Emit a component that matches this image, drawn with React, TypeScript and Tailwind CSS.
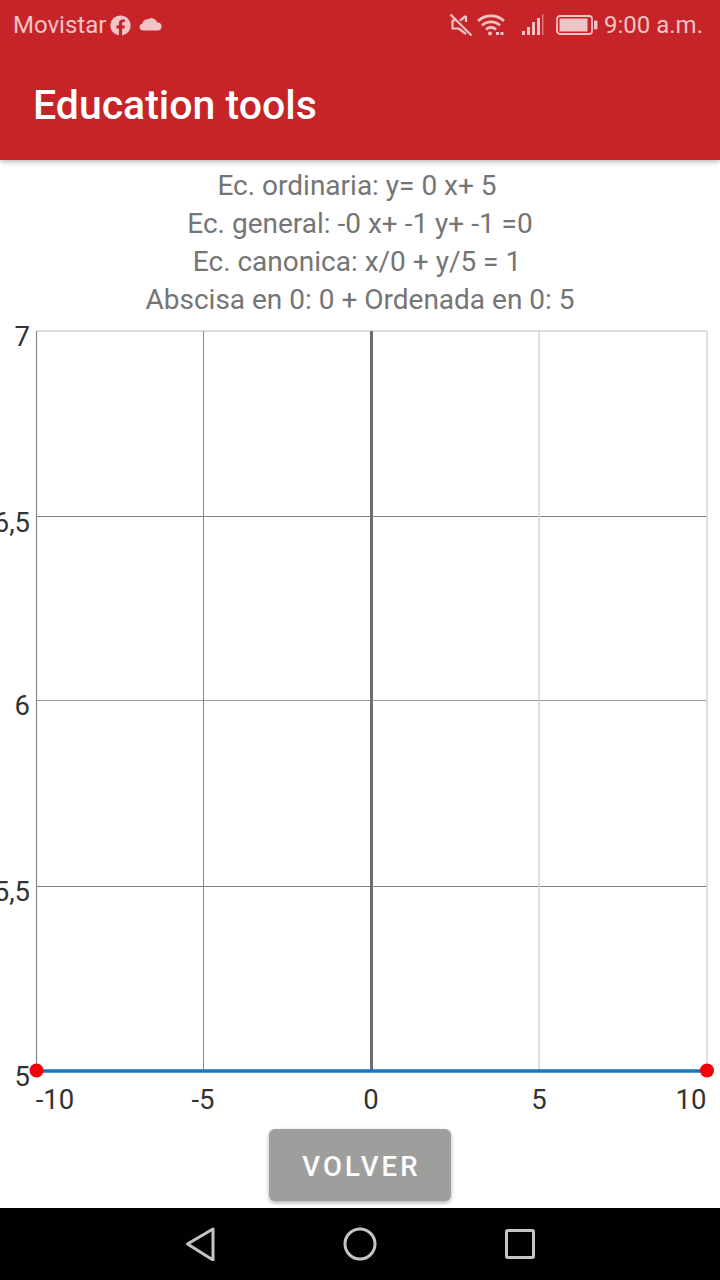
export default function App() {
  const roboto = "font-['Roboto',sans-serif]";
  return (
    <div className={`w-[720px] h-[1280px] bg-white flex flex-col overflow-hidden ${roboto}`}>
      <header className="h-[160px] shrink-0 bg-[#c62428] flex flex-col shadow-[0_2px_5px_rgba(0,0,0,0.28)] relative z-10">
        <div className="h-[50px] shrink-0 flex items-center justify-between pl-[13px] pr-[17px] text-[#f3c3c5]">
          <div className="flex items-center">
            <span className="text-[24px] leading-[30px]">Movistar</span>
            <svg className="ml-[4px]" width="21" height="21" viewBox="0 0 21 21">
              <path fill="#f3c3c5" d="M10.5 0.5a10 10 0 0 0-1.6 19.9v-7H6.4v-2.9h2.5V8.3c0-2.5 1.500-3.900 3.800-3.900 1.100 0 2.200.2 2.200.2v2.500h-1.200c-1.200 0-1.600.8-1.600 1.600v1.800h2.800l-.5 2.900h-2.300v7a10 10 0 0 0-1.600-19.900z" />
            </svg>
            <svg className="ml-[8px] mb-[3px]" width="23" height="14" viewBox="0 0 23 14">
              <path fill="#f3c3c5" d="M4 13.500a3.600 3.600 0 0 1-.6-7.100A5.400 5.400 0 0 1 8.700 2.300a6 6 0 0 1 9.400 3.200 4 4 0 0 1 .9 8z" />
            </svg>
          </div>
          <div className="flex items-center">
            <svg width="24" height="24" viewBox="0 0 24 24" fill="none" stroke="#f3c3c5" strokeWidth="2.200" className="mr-[4px]">
              <path d="M1.500 1.500l21 21" />
              <path d="M17 3v6M17 21l-7.500-5.500H3.500V7.500h2.800" strokeLinejoin="round" />
              <path d="M17 3l-6 4.500" />
            </svg>
            <svg width="28" height="24" viewBox="0 0 28 24" fill="none" stroke="#f3c3c5" strokeWidth="2.600" className="mr-[16px]">
              <path d="M1 8a19 19 0 0 1 26 0" />
              <path d="M5 12.500a13 13 0 0 1 18 0" />
              <path d="M9 16.500a7 7 0 0 1 10 0" />
              <circle cx="13" cy="20.500" r="2" fill="#f3c3c5" stroke="none" />
              <path d="M19 20.500h3M23.500 20.500h3" strokeWidth="3" />
            </svg>
            <svg width="24" height="24" viewBox="0 0 24 24" fill="#f3c3c5" className="mr-[11px]">
              <rect x="1" y="18" width="3" height="4" />
              <rect x="6" y="14" width="3" height="8" />
              <rect x="11" y="9" width="3" height="13" />
              <rect x="16" y="5" width="3" height="17" />
              <rect x="21" y="1" width="1.500" height="21" opacity="0.5" />
            </svg>
            <svg width="42" height="20" viewBox="0 0 42 20" className="mr-[6px]">
              <rect x="1" y="1" width="35" height="18" rx="3" fill="none" stroke="#f3c3c5" strokeWidth="1.800" />
              <rect x="3.500" y="3.500" width="28" height="13" fill="#eec4c6" />
              <rect x="38" y="5.500" width="3.500" height="9" rx="1" fill="#f3c3c5" />
            </svg>
            <span className="text-[24px] leading-[30px]">9:00 a.m.</span>
          </div>
        </div>
        <h1 className="pl-[33px] mt-[31px] text-[41px] leading-[48px] font-medium text-white">Education tools</h1>
      </header>

      <main className="flex-1 min-h-0 flex flex-col items-center">
        <div className="pt-[7px] text-[28px] leading-[38px] text-[#757575] text-center h-[160px] shrink-0 w-full">
          <p className="pr-[6px]">Ec. ordinaria: y= 0 x+ 5</p>
          <p>Ec. general: -0 x+ -1 y+ -1 =0</p>
          <p className="pr-[6px]">Ec. canonica: x/0 + y/5 = 1</p>
          <p>Abscisa en 0: 0 + Ordenada en 0: 5</p>
        </div>
        <svg width="720" height="800" viewBox="0 320 720 800" className="block shrink-0" fontFamily="Roboto, sans-serif" fontSize="27.500" fill="#333">
          <g strokeWidth="1" fill="none">
            <path d="M36.500 331H707" stroke="#d2d2d2" strokeWidth="1.500" />
            <path d="M36.500 516.500H707" stroke="#808080" />
            <path d="M36.500 700.500H707" stroke="#9a9a9a" />
            <path d="M36.500 886.500H707" stroke="#808080" />
            <path d="M36.500 331V1071" stroke="#888" strokeWidth="1.200" />
            <path d="M203.500 331V1071" stroke="#888" />
            <path d="M539 331V1071" stroke="#d4d4d4" strokeWidth="1.500" />
            <path d="M707 331V1071" stroke="#d4d4d4" strokeWidth="1.500" />
            <path d="M371.500 331V1071" stroke="#6d6d6d" strokeWidth="3" />
            <path d="M36.500 1071H707" stroke="#1976c2" strokeWidth="3.500" />
          </g>
          <circle cx="36.500" cy="1070.500" r="7" fill="#f40009" />
          <circle cx="707" cy="1070.500" r="7" fill="#f40009" />
          <g textAnchor="end">
            <text x="30" y="346">7</text>
            <text x="30" y="532">6,5</text>
            <text x="30" y="715">6</text>
            <text x="30" y="901">5,5</text>
            <text x="30" y="1086">5</text>
          </g>
          <g textAnchor="middle">
            <text x="55" y="1109">-10</text>
            <text x="203" y="1109">-5</text>
            <text x="371" y="1109">0</text>
            <text x="539" y="1109">5</text>
            <text x="691" y="1109">10</text>
          </g>
        </svg>
        <div className="pt-[9px] flex justify-center shrink-0">
          <button className="w-[182px] h-[72px] pt-[3px] pl-[3px] rounded-[6px] bg-[#9e9f9d] text-white text-[27.500px] font-medium tracking-[3.200px] shadow-[0_2px_4px_rgba(0,0,0,0.3)]">VOLVER</button>
        </div>
      </main>

      <nav className="h-[72px] shrink-0 bg-[#000200] relative z-10 flex items-center justify-center">
        <div className="flex items-center">
          <svg width="32" height="34" viewBox="0 0 32 34" fill="none" stroke="#c4c4c4" strokeWidth="3" strokeLinejoin="round" className="mr-[126px]">
            <path d="M2.500 17L28 2v31z" />
          </svg>
          <svg width="34" height="34" viewBox="0 0 34 34" fill="none" stroke="#c4c4c4" strokeWidth="3" className="mr-[128px]">
            <circle cx="17" cy="17" r="15" />
          </svg>
          <svg width="30" height="30" viewBox="0 0 30 30" fill="none" stroke="#c4c4c4" strokeWidth="3" strokeLinejoin="round">
            <rect x="1.500" y="1.500" width="27" height="27" rx="1.500" />
          </svg>
        </div>
      </nav>
    </div>
  );
}
